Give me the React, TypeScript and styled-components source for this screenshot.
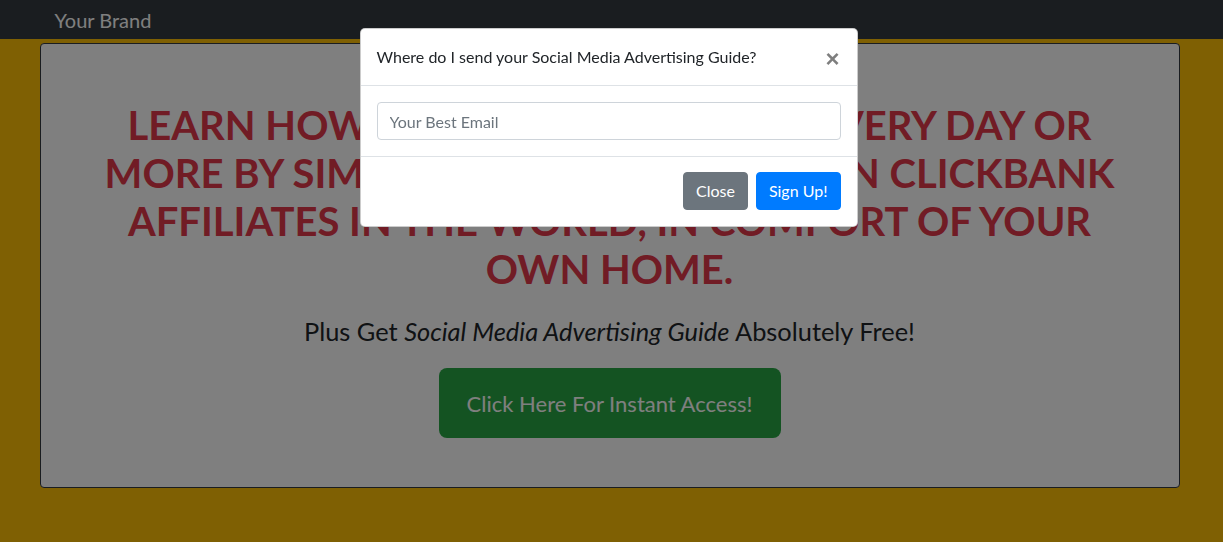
import React from "react";
import styled, { createGlobalStyle } from "styled-components";

const GlobalStyle = createGlobalStyle`
  *, *::before, *::after { box-sizing: border-box; }
  html, body {
    margin: 0;
    padding: 0;
    background: #ffc107;
    font-family: Lato, "Liberation Sans", sans-serif;
    color: #212529;
  }
  body { min-height: 100vh; overflow: hidden; }
`;

const Navbar = styled.nav`
  height: 39px;
  background: #343a40;
  display: flex;
  align-items: center;
  padding-right: 4px;
`;

const NavContainer = styled.div`
  width: 1140px;
  margin: 0 auto;
  padding: 0 15px;
`;

const Brand = styled.a`
  color: #ffffff;
  font-size: 20px;
  line-height: 30px;
  text-decoration: none;
`;

const Page = styled.main`
  padding: 4px 4px 0 0;
`;

const Card = styled.section`
  width: 1140px;
  margin: 0 auto;
  background: #ffffff;
  border: 1px solid #343a40;
  border-radius: 4px;
  padding: 57px 20px 49px;
  display: flex;
  flex-direction: column;
  align-items: center;
  text-align: center;
`;

const Headline = styled.h1`
  margin: 0;
  max-width: 1050px;
  font-size: 40px;
  line-height: 48px;
  font-weight: 700;
  color: #e3384a;
  text-transform: uppercase;
`;

const Subhead = styled.h4`
  margin: 23px 0 0;
  font-size: 25.4px;
  line-height: 30px;
  font-weight: 400;
  color: #212529;

  em {
    font-style: italic;
  }
`;

const CtaButton = styled.a`
  margin-top: 22px;
  width: 342px;
  height: 70px;
  display: flex;
  align-items: center;
  justify-content: center;
  background: #28a745;
  color: #ffffff;
  font-size: 22px;
  border-radius: 8px;
  text-decoration: none;
`;

const Backdrop = styled.div`
  position: fixed;
  inset: 0;
  background: rgba(0, 0, 0, 0.5);
  z-index: 10;
`;

const ModalLayer = styled.div`
  position: fixed;
  inset: 0;
  z-index: 20;
  display: flex;
  justify-content: center;
  align-items: flex-start;
  padding: 28px 6px 0 0;
`;

const Dialog = styled.div`
  width: 498px;
  background: #ffffff;
  border: 1px solid rgba(0, 0, 0, 0.2);
  border-radius: 5px;
  display: flex;
  flex-direction: column;
`;

const ModalHeader = styled.div`
  display: flex;
  align-items: flex-start;
  padding: 16px;
  border-bottom: 1px solid #dee2e6;
`;

const ModalTitle = styled.h5`
  margin: 0;
  font-size: 16px;
  line-height: 24px;
  font-weight: 400;
  color: #212529;
`;

const CloseX = styled.button`
  margin: -16px -16px -16px auto;
  padding: 18px 17px 14px 15px;
  background: transparent;
  border: 0;
  font-family: "Liberation Sans", sans-serif;
  font-size: 24px;
  font-weight: 700;
  line-height: 24px;
  color: #000;
  opacity: 0.5;
  cursor: pointer;
`;

const ModalBody = styled.div`
  padding: 16px;
`;

const EmailInput = styled.input`
  display: block;
  width: 100%;
  height: 38px;
  padding: 6px 12px;
  font-family: inherit;
  font-size: 16px;
  line-height: 24px;
  color: #495057;
  background: #fff;
  border: 1px solid #ced4da;
  border-radius: 4px;
  outline: none;

  &::placeholder {
    color: #6c757d;
    opacity: 1;
  }
`;

const ModalFooter = styled.div`
  display: flex;
  justify-content: flex-end;
  align-items: center;
  gap: 8px;
  padding: 15px 16px 16px;
  border-top: 1px solid #dee2e6;
`;

const Btn = styled.button<{ $variant: "secondary" | "primary" }>`
  height: 38px;
  padding: 6px 12px;
  font-family: inherit;
  font-size: 16px;
  line-height: 24px;
  color: #fff;
  border-radius: 4px;
  border: 1px solid ${(p) => (p.$variant === "primary" ? "#007bff" : "#6c757d")};
  background: ${(p) => (p.$variant === "primary" ? "#007bff" : "#6c757d")};
  cursor: pointer;
`;

export default function App() {
  return (
    <>
      <GlobalStyle />
      <Navbar>
        <NavContainer>
          <Brand href="#">Your Brand</Brand>
        </NavContainer>
      </Navbar>
      <Page>
        <Card>
          <Headline>
            Learn how to earn up to $1000 every day or more by simply copying the top ten Clickbank affiliates in the
            world, in comfort of your own home.
          </Headline>
          <Subhead>
            Plus Get <em>Social Media Advertising Guide</em> Absolutely Free!
          </Subhead>
          <CtaButton href="#">Click Here For Instant Access!</CtaButton>
        </Card>
      </Page>
      <Backdrop />
      <ModalLayer>
        <Dialog role="dialog">
          <ModalHeader>
            <ModalTitle>Where do I send your Social Media Advertising Guide?</ModalTitle>
            <CloseX aria-label="Close">×</CloseX>
          </ModalHeader>
          <ModalBody>
            <EmailInput type="email" placeholder="Your Best Email" />
          </ModalBody>
          <ModalFooter>
            <Btn $variant="secondary">Close</Btn>
            <Btn $variant="primary">Sign Up!</Btn>
          </ModalFooter>
        </Dialog>
      </ModalLayer>
    </>
  );
}
